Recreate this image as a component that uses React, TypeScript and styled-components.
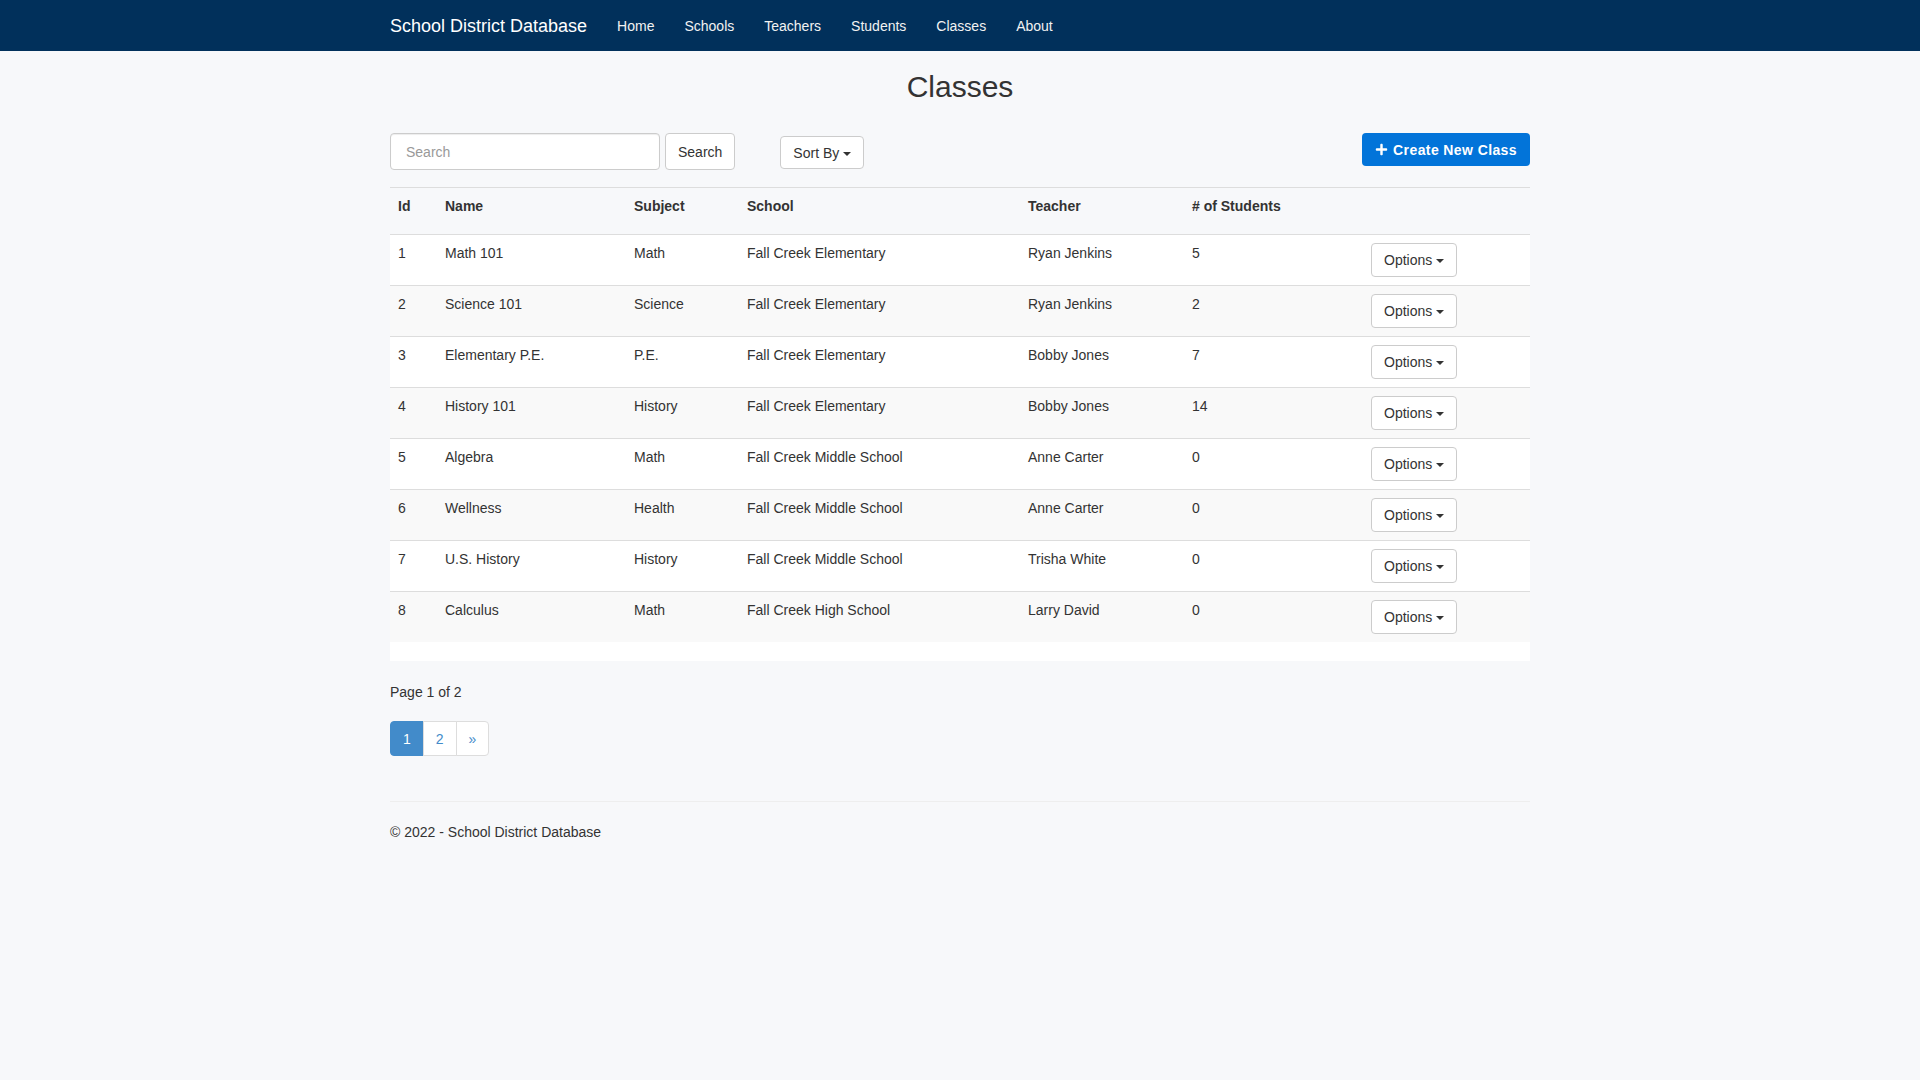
import styled, { createGlobalStyle } from "styled-components"
import { FaPlus } from "react-icons/fa"

const GlobalStyle = createGlobalStyle`
    html, body {
        margin: 0;
        padding: 0;
        background: #f7f8fa;
        font-family: "Liberation Sans", Arial, Helvetica, sans-serif;
        font-size: 14px;
        line-height: 20px;
        color: #333;
    }
    * { box-sizing: border-box; }
`

const Navbar = styled.nav`
    height: 51px;
    background: #01305b;
    .inner{
        width: 1170px;
        margin: 0 auto;
        padding: 0 15px;
        display: flex;
        align-items: center;
        height: 100%;
    }
    .brand{
        font-size: 18px;
        color: #fff;
        padding-right: 15px;
        line-height: 50px;
    }
    a{
        color: #f2f2f2;
        text-decoration: none;
        padding: 0 15px;
        line-height: 50px;
    }
`

const Container = styled.main`
    width: 1170px;
    margin: 0 auto;
    padding: 0 15px;
`

const Title = styled.h2`
    margin: 19px 0 30px;
    font-size: 30px;
    line-height: 33px;
    font-weight: 400;
    text-align: center;
    color: #333;
`

const Toolbar = styled.div`
    display: flex;
    align-items: flex-start;
    margin-bottom: 17px;
`

const SearchInput = styled.input`
    width: 270px;
    height: 37px;
    padding: 6px 15px;
    border: 1px solid #ccc;
    border-radius: 4px;
    font: inherit;
    color: #555;
    background: #fff;
    box-shadow: inset 0 1px 1px rgba(0,0,0,.075);
    &::placeholder{ color: #999; }
`

const Button = styled.button<{ $height?: number }>`
    height: ${({ $height }) => $height ?? 34}px;
    padding: 0 12px;
    border: 1px solid #ccc;
    border-radius: 4px;
    background: #fff;
    color: #333;
    font: inherit;
    display: inline-flex;
    align-items: center;
    gap: 4px;
    cursor: pointer;
`

const Caret = styled.span`
    display: inline-block;
    width: 0;
    height: 0;
    border-top: 4px solid #333;
    border-left: 4px solid transparent;
    border-right: 4px solid transparent;
    margin-top: 2px;
`

const CreateButton = styled.button`
    margin-left: auto;
    height: 33px;
    padding: 0 13px;
    border: none;
    border-radius: 4px;
    background: #0274d9;
    color: #fff;
    font: inherit;
    font-weight: 700;
    letter-spacing: .4px;
    display: inline-flex;
    align-items: center;
    gap: 5px;
    cursor: pointer;
`

const Table = styled.table`
    width: 100%;
    border-collapse: collapse;
    table-layout: fixed;
    th, td{
        text-align: left;
        vertical-align: top;
        padding: 8px;
        border-top: 1px solid #ddd;
    }
    th{
        font-weight: 700;
        padding: 8px 8px 18px;
        border-bottom: 1px solid #ddd;
    }
    tbody tr:nth-child(odd){ background: #fff; }
    tbody tr:nth-child(even){ background: #f9f9f9; }
    td.opt{ padding: 8px; }
`

const TableTail = styled.div`
    height: 19px;
    background: #fff;
`

const PageInfo = styled.p`
    margin: 21px 0 19px;
`

const Pagination = styled.ul`
    display: inline-flex;
    margin: 0;
    padding: 0;
    list-style: none;
    li{
        height: 35px;
        padding: 0 12px;
        display: flex;
        align-items: center;
        border: 1px solid #ddd;
        margin-left: -1px;
        background: #fff;
        color: #428bca;
    }
    li:first-child{ margin-left: 0; border-radius: 4px 0 0 4px; }
    li:last-child{ border-radius: 0 4px 4px 0; }
    li.active{ background: #428bca; border-color: #428bca; color: #fff; }
`

const Footer = styled.footer`
    margin-top: 45px;
    border-top: 1px solid #eee;
    padding-top: 20px;
    p{ margin: 0; }
`

const classes = [
    { id: 1, name: "Math 101", subject: "Math", school: "Fall Creek Elementary", teacher: "Ryan Jenkins", students: 5 },
    { id: 2, name: "Science 101", subject: "Science", school: "Fall Creek Elementary", teacher: "Ryan Jenkins", students: 2 },
    { id: 3, name: "Elementary P.E.", subject: "P.E.", school: "Fall Creek Elementary", teacher: "Bobby Jones", students: 7 },
    { id: 4, name: "History 101", subject: "History", school: "Fall Creek Elementary", teacher: "Bobby Jones", students: 14 },
    { id: 5, name: "Algebra", subject: "Math", school: "Fall Creek Middle School", teacher: "Anne Carter", students: 0 },
    { id: 6, name: "Wellness", subject: "Health", school: "Fall Creek Middle School", teacher: "Anne Carter", students: 0 },
    { id: 7, name: "U.S. History", subject: "History", school: "Fall Creek Middle School", teacher: "Trisha White", students: 0 },
    { id: 8, name: "Calculus", subject: "Math", school: "Fall Creek High School", teacher: "Larry David", students: 0 },
]

const App = () => {
    return (
        <>
            <GlobalStyle />
            <Navbar>
                <div className="inner">
                    <span className="brand">School District Database</span>
                    {["Home", "Schools", "Teachers", "Students", "Classes", "About"].map(link => (
                        <a href="#" key={link}>{link}</a>
                    ))}
                </div>
            </Navbar>
            <Container>
                <Title>Classes</Title>
                <Toolbar>
                    <SearchInput placeholder="Search" />
                    <Button $height={37} style={{ marginLeft: 5 }}>Search</Button>
                    <Button $height={33} style={{ marginLeft: 45, marginTop: 3 }}>Sort By <Caret /></Button>
                    <CreateButton><FaPlus size={13} />Create New Class</CreateButton>
                </Toolbar>
                <Table>
                    <colgroup>
                        <col style={{ width: 47 }} />
                        <col style={{ width: 189 }} />
                        <col style={{ width: 113 }} />
                        <col style={{ width: 281 }} />
                        <col style={{ width: 164 }} />
                        <col style={{ width: 179 }} />
                        <col />
                    </colgroup>
                    <thead>
                        <tr>
                            <th>Id</th>
                            <th>Name</th>
                            <th>Subject</th>
                            <th>School</th>
                            <th>Teacher</th>
                            <th># of Students</th>
                            <th></th>
                        </tr>
                    </thead>
                    <tbody>
                        {classes.map(c => (
                            <tr key={c.id}>
                                <td>{c.id}</td>
                                <td>{c.name}</td>
                                <td>{c.subject}</td>
                                <td>{c.school}</td>
                                <td>{c.teacher}</td>
                                <td>{c.students}</td>
                                <td className="opt"><Button>Options <Caret /></Button></td>
                            </tr>
                        ))}
                    </tbody>
                </Table>
                <TableTail />
                <PageInfo>Page 1 of 2</PageInfo>
                <Pagination>
                    <li className="active">1</li>
                    <li>2</li>
                    <li>»</li>
                </Pagination>
                <Footer>
                    <p>© 2022 - School District Database</p>
                </Footer>
            </Container>
        </>
    )
}

export default App
